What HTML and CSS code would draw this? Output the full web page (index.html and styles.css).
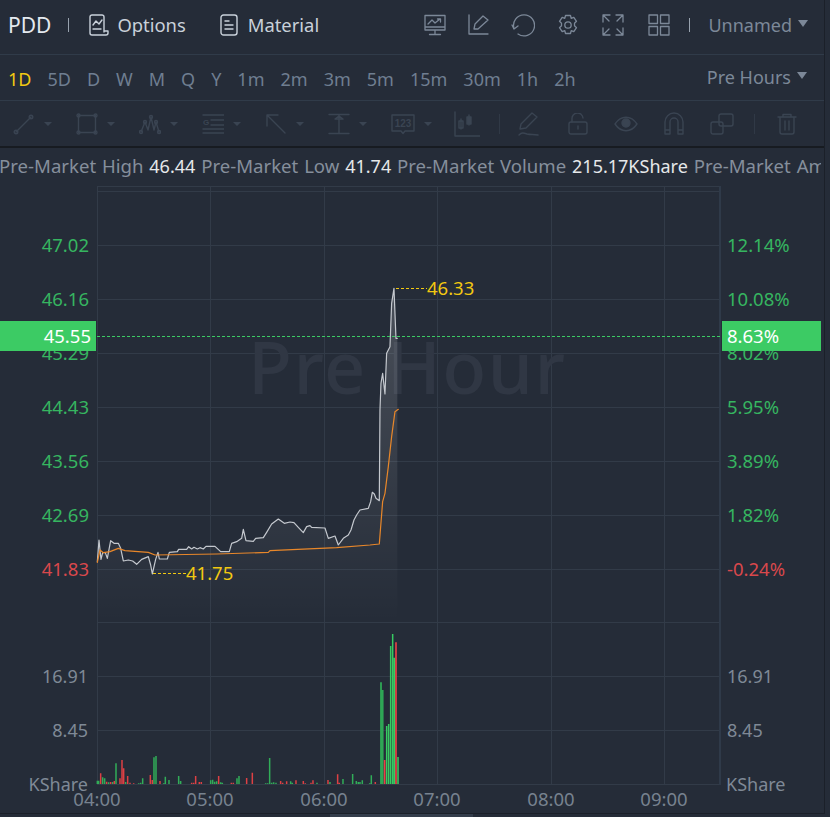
FILE: index.html
```html
<!DOCTYPE html>
<html lang="en">
<head>
<meta charset="utf-8">
<title>PDD Pre Hours chart</title>
<link rel="stylesheet" href="styles.css">
</head>
<body>
<div class="app">
  <header class="topbar">
    <span class="symbol">PDD</span>
    <span class="sep sep-left"></span>
    <a class="toplink link-options">
      <svg class="ic20" viewBox="0 0 20 22"><path d="M15 18V3a2 2 0 0 0-2-2H3a2 2 0 0 0-2 2v16a2 2 0 0 0 2 2h14a2 2 0 0 0 2-2v-2h-4"/><path d="M4 11l3-4 3 3 3-4"/><path d="M4 15h8"/></svg>
      Options
    </a>
    <a class="toplink link-material">
      <svg class="ic18" viewBox="0 0 18 22"><rect x="1" y="1" width="16" height="20" rx="2.5"/><path d="M5 7h4M5 11h8M5 15h8"/></svg>
      Material
    </a>
    <div class="top-actions">
      <svg class="act" viewBox="0 0 22 22"><path d="M1 1.500h20v14.500H1zM11 16v4M5.500 20.500h11M1 13h20"/><path d="M4 10l4-4 3 3 5-4M13.500 5H16.500V8"/></svg>
      <svg class="act" viewBox="0 0 22 22"><path d="M1 1V20H20M6 15l1-5L15 2l5 4-10 9z"/></svg>
      <svg class="act act-wide" viewBox="0 0 24 24"><path d="M7 21A10.500 10.500 0 1 0 3 15.500"/><path d="M1 12 3 16 7 13"/></svg>
      <svg class="act" viewBox="0 0 22 22"><path d="M8.500 1.500h5l.7 2.800 2.600-1 2.700 4-2 2v2.400l2 2-2.700 4-2.600-1-.7 2.800h-5l-.7-2.800-2.600 1-2.700-4 2-2V9.300l-2-2 2.700-4 2.600 1z"/><circle cx="11" cy="11" r="3.200"/></svg>
      <svg class="act" viewBox="0 0 22 22"><path d="M1 8V1h7M1 1l6 6M21 8V1h-7M21 1l-6 6M1 14v7h7M1 21l6-6M21 14v7h-7M21 21l-6-6"/></svg>
      <svg class="act" viewBox="0 0 22 22"><rect x="1" y="1" width="8.500" height="8.500"/><rect x="12.500" y="1" width="8.500" height="8.500"/><rect x="1" y="12.500" width="8.500" height="8.500"/><rect x="12.500" y="12.500" width="8.500" height="8.500"/></svg>
      <span class="sep sep-right"></span>
      <span class="dropdown">Unnamed<i class="caret"></i></span>
    </div>
  </header>

  <nav class="periods">
    <a class="period active">1D</a><a class="period">5D</a><a class="period">D</a><a class="period">W</a><a class="period">M</a><a class="period">Q</a><a class="period">Y</a><a class="period">1m</a><a class="period">2m</a><a class="period">3m</a><a class="period">5m</a><a class="period">15m</a><a class="period">30m</a><a class="period">1h</a><a class="period">2h</a>
    <span class="dropdown session">Pre Hours<i class="caret"></i></span>
  </nav>

  <div class="tools">
    <span class="tool"><svg class="t" viewBox="0 0 22 22"><path d="M3 19 18 4"/><circle cx="3" cy="19" r="1.800"/><circle cx="18" cy="4" r="1.800"/></svg><i class="mini"></i></span>
    <span class="tool"><svg class="t" viewBox="0 0 22 22"><rect x="2.500" y="2.500" width="17" height="17"/><circle cx="2.500" cy="2.500" r="1.500"/><circle cx="19.500" cy="2.500" r="1.500"/><circle cx="2.500" cy="19.500" r="1.500"/><circle cx="19.500" cy="19.500" r="1.500"/></svg><i class="mini"></i></span>
    <span class="tool"><svg class="t" viewBox="0 0 22 22"><path d="M2 19 6 9 9 17 12 4 15 17 17 9 20 19"/><circle cx="2" cy="19" r="1.500"/><circle cx="6" cy="9" r="1.500"/><circle cx="12" cy="4" r="1.500"/><circle cx="17" cy="9" r="1.500"/><circle cx="20" cy="19" r="1.500"/></svg><i class="mini"></i></span>
    <span class="tool"><svg class="t" viewBox="0 0 22 22"><path d="M1 2h21M9 7h13M9 12h13M1 16h21M1 20h21"/><text class="t-g" x="1" y="12">G</text></svg><i class="mini"></i></span>
    <span class="tool"><svg class="t" viewBox="0 0 22 22"><path d="M2 2 20 20M2 13V2h11"/></svg><i class="mini"></i></span>
    <span class="tool"><svg class="t" viewBox="0 0 22 22"><path d="M1 1.500h20M1 20.500h20M11 2v18M7 6l4-3 4 3z"/></svg><i class="mini"></i></span>
    <span class="tool"><svg class="t t-wide" viewBox="0 0 24 22"><path d="M1 2h22v16h-9l-2 2.500-2-2.500H1z"/><text class="t-num" x="12" y="14">123</text></svg><i class="mini"></i></span>
    <span class="tool tool-chart"><svg class="t t-chart" viewBox="0 0 26 26"><path d="M1 1v24h25M7 8v10M15 4v10"/><rect x="5" y="10" width="4" height="7"/><rect x="13" y="6" width="4" height="7" class="fill"/></svg></span>
    <span class="tdiv"></span>
    <svg class="t t-pen" viewBox="0 0 22 24"><path d="M2 17l1-5L14 1l5 4L8 16zM1 23c3-3 5-2 8-1 4 1 6 0 11 1"/></svg>
    <svg class="t t-lock" viewBox="0 0 20 22"><rect x="1" y="9" width="18" height="12" rx="2"/><path d="M4 9V6a5.500 5.500 0 0 1 11-1M10 13v3"/></svg>
    <svg class="t t-eye" viewBox="0 0 24 22"><path d="M1 11c6-9 16-9 22 0-6 9-16 9-22 0z"/><circle cx="12" cy="10" r="4" class="fill"/></svg>
    <svg class="t t-mag" viewBox="0 0 20 24"><path d="M1 22V10a9 9 0 0 1 18 0v12h-5V10a4 4 0 0 0-8 0v12zM1 18h5M14 18h5"/></svg>
    <svg class="t t-copy" viewBox="0 0 24 22"><rect x="9" y="1" width="14" height="12" rx="2"/><rect x="1" y="9" width="12" height="12" rx="2"/></svg>
    <span class="tdiv tdiv-2"></span>
    <svg class="t t-trash" viewBox="0 0 20 22"><path d="M1 4h18M6 4V1.500h8V4M3 4v15a2 2 0 0 0 2 2h10a2 2 0 0 0 2-2V4M8 8v9M12 8v9"/></svg>
  </div>

  <div class="stats">
    Pre-Market High <b>46.44</b> Pre-Market Low <b>41.74</b> Pre-Market Volume <b>215.17KShare</b> Pre-Market Amount
  </div>

  <svg class="chart" viewBox="0 186 825 628" width="825" height="628">
    <defs>
      <linearGradient id="area" gradientUnits="userSpaceOnUse" x1="0" y1="-636" x2="0" y2="366">
        <stop offset="0" stop-color="#fff" stop-opacity=".17"/>
        <stop offset="1" stop-color="#fff" stop-opacity="0"/>
      </linearGradient>
    </defs>

    <path class="grid" d="M97 186.500H720M97 191.500H720M97 245.500H720M97 299.500H720M97 353.500H720M97 407.500H720M97 461.500H720M97 515.500H720M97 569.500H720M97 622.500H720M97 676.500H720M97 730.500H720M97 784.500H720M97.500 186V785M210.500 186V785M324.500 186V785M437.500 186V785M551.500 186V785M664.500 186V785"/>
    <path class="grid grid-edge" d="M720 186V785"/>

    <text class="watermark" x="248" y="394">Pre Hour</text>

    <g transform="translate(90 500) scale(.3333)">
      <path class="area" d="M22 366V185L27 120 33 178 38 158 46 158 52 175 62 122 72 130 85 130 92 145 100 183 115 180 128 183 140 193 155 178 175 170 182 195 187 222 197 178 204 157 208 177 232 177 238 157 262 155 266 148 290 148 296 140 305 147 312 142 322 147 330 143 340 147 348 139 375 139 392 155 418 155 425 130 440 125 455 115 460 88 468 122 490 124 497 115 520 113 530 97 545 72 565 57 583 70 600 66 612 68 625 82 640 98 650 80 660 77 665 82 705 84 715 115 735 108 750 128 760 115 775 105 783 90 792 60 800 45 810 30 835 25 842 5 847 -23 853 -18 858 -5 868 2 870 -270 873 -350 878 -380 885 -318 890 -440 900 -460 905 -590 912 -635 918 -485 922 -485V366Z"/>
      <path class="white-line" d="M22 185 27 120 33 178 38 158 46 158 52 175 62 122 72 130 85 130 92 145 100 183 115 180 128 183 140 193 155 178 175 170 182 195 187 222 197 178 204 157 208 177 232 177 238 157 262 155 266 148 290 148 296 140 305 147 312 142 322 147 330 143 340 147 348 139 375 139 392 155 418 155 425 130 440 125 455 115 460 88 468 122 490 124 497 115 520 113 530 97 545 72 565 57 583 70 600 66 612 68 625 82 640 98 650 80 660 77 665 82 705 84 715 115 735 108 745 135 760 115 775 105 783 90 792 60 800 45 810 30 835 25 842 5 847 -23 853 -18 858 -5 868 2 870 -270 873 -350 878 -380 885 -318 890 -440 900 -460 905 -590 912 -635 918 -485 922 -485"/>
      <path class="orange-line" d="M22 187 30 150 40 158 60 155 85 145 105 152 175 157 195 165 380 162 535 157 540 152 740 143 840 135 868 132 878 5 885 -20 895 -100 905 -190 915 -265 925 -272"/>
    </g>

    <path class="dash-green" d="M97 336.500H720"/>
    <path class="dash-yellow" d="M396 288.500H427M153 573.500H186"/>
    <text class="note" x="427" y="295">46.33</text>
    <text class="note" x="186" y="580">41.75</text>

    <g transform="translate(90 720) scale(.3333)">
      <path class="vol-g" d="M22 192V182M26 192V182M38 192V172M44 192V175M56 192V187M68 192V186M78 192V130M107 192V186M146 192V190M152 192V188M158 192V175M192 192V112M198 192V108M221 192V190M226 192V170M237 192V180M266 192V168M272 192V183M362 192V181M368 192V179M374 192V185M380 192V184M392 192V187M397 192V188M441 192V175M447 192V168M527 192V190M533 192V190M539 192V114M545 192V188M551 192V187M558 192V188M602 192V184M607 192V188M681 192V188M720 192V186M759 192V177M788 192V162M799 192V183M805 192V186M810 192V186M817 192V181M839 192V190M844 192V166"/>
      <path class="vol-r" d="M32 192V160M50 192V185M62 192V186M73 192V183M90 192V175M96 192V120M101 192V145M113 192V168M120 192V188M131 192V190M181 192V165M187 192V180M210 192V183M305 192V188M311 192V188M317 192V168M328 192V186M334 192V186M386 192V168M424 192V188M430 192V188M470 192V174M487 192V158M572 192V183M578 192V188M590 192V184M618 192V181M640 192V183M646 192V190M663 192V188M669 192V181M714 192V180M743 192V163M748 192V188M856 192V186"/>
    </g>
    <g transform="translate(370 625) scale(.3333)">
      <path class="vol-big-d" d="M33 477V172M38 477V195"/>
      <path class="vol-big-g" d="M50 477V303M56 477V297M62 477V63M68 477V27M73 477V98M84 477V396"/>
      <path class="vol-big-r" d="M44 477V405M78 477V52"/>
    </g>

    <g class="axis-left">
      <text class="up" x="89" y="252">47.02</text>
      <text class="up" x="89" y="306">46.16</text>
      <text class="up" x="89" y="360">45.29</text>
      <text class="up" x="89" y="414">44.43</text>
      <text class="up" x="89" y="468">43.56</text>
      <text class="up" x="89" y="522">42.69</text>
      <text class="down" x="89" y="576">41.83</text>
      <text class="mute" x="88" y="683">16.91</text>
      <text class="mute" x="88" y="737">8.45</text>
      <text class="mute" x="88" y="791">KShare</text>
    </g>
    <g class="axis-right">
      <text class="up" x="727" y="252">12.14%</text>
      <text class="up" x="727" y="306">10.08%</text>
      <text class="up" x="727" y="360">8.02%</text>
      <text class="up" x="727" y="414">5.95%</text>
      <text class="up" x="727" y="468">3.89%</text>
      <text class="up" x="727" y="522">1.82%</text>
      <text class="down" x="727" y="576">-0.24%</text>
      <text class="mute" x="727" y="683">16.91</text>
      <text class="mute" x="727" y="737">8.45</text>
      <text class="mute" x="726" y="791">KShare</text>
    </g>
    <g class="axis-x">
      <text x="97" y="806">04:00</text>
      <text x="210" y="806">05:00</text>
      <text x="324" y="806">06:00</text>
      <text x="437" y="806">07:00</text>
      <text x="551" y="806">08:00</text>
      <text x="664" y="806">09:00</text>
    </g>

    <rect class="badge" x="0" y="321" width="96" height="30"/>
    <rect class="badge" x="722" y="321" width="99" height="30"/>
    <text class="badge-text end" x="91" y="343">45.55</text>
    <text class="badge-text" x="727" y="343">8.63%</text>
  </svg>
</div>
<div class="statusbar"><span class="status-seg"></span></div>
</body>
</html>
```
FILE: styles.css
```css
* { box-sizing: border-box; }
html, body { margin: 0; padding: 0; }
body {
  width: 830px;
  height: 817px;
  overflow: hidden;
  background: #252c38;
  font-family: "Noto Sans", "Open Sans", sans-serif;
  font-size: 18px;
  color: #7c8898;
}
.app {
  width: 825px;
  height: 814px;
  border-right: 1px solid #1b2029;
  border-bottom: 1px solid #1b2029;
  display: flex;
  flex-direction: column;
  overflow: hidden;
}
.statusbar { height: 3px; padding-left: 330px; }
.status-seg { display: block; width: 143px; height: 3px; background: #343d4b; }

svg { fill: none; stroke-linecap: round; stroke-linejoin: round; }

/* top bar */
.topbar {
  height: 55px;
  flex: none;
  display: flex;
  align-items: center;
  padding-left: 8px;
  padding-bottom: 5px;
  border-bottom: 1px solid #303b49;
}
.symbol { font-size: 21px; color: #e4e9ef; }
.sep { width: 1px; height: 14px; background: #98a2ae; flex: none; }
.sep-left { margin-left: 17px; }
.toplink { display: flex; align-items: center; color: #c9d1da; font-size: 18.4px; }
.toplink svg { stroke: #c9d1da; stroke-width: 1.4; }
.link-options { margin-left: 20px; gap: 8px; }
.link-material { margin-left: 34px; gap: 10px; }
.ic20 { width: 20px; height: 22px; }
.ic18 { width: 18px; height: 22px; }
.top-actions { margin-left: auto; display: flex; align-items: center; }
.act { width: 22px; height: 22px; margin-right: 23px; stroke: #7c8898; stroke-width: 1.3; }
.act-wide { width: 24px; height: 24px; margin-right: 22px; }
.act:nth-of-type(1) { margin-right: 22px; }
.act:nth-of-type(2) { margin-right: 21px; }
.act:nth-of-type(5) { margin-right: 24px; }
.act:nth-of-type(6) { margin-right: 19px; }
.sep-right { margin-right: 18px; }
.top-actions .dropdown { margin-right: 16px; }
.dropdown { display: flex; align-items: center; gap: 6px; }
.caret {
  width: 0;
  height: 0;
  border-left: 5px solid transparent;
  border-right: 5px solid transparent;
  border-top: 7px solid #7c8898;
  margin-top: -3px;
}

/* period row */
.periods {
  height: 46px;
  flex: none;
  display: flex;
  align-items: center;
  gap: 16px;
  padding-left: 8px;
  padding-right: 17px;
  padding-top: 2px;
  border-bottom: 1px solid #303b49;
}
.period { color: #6f7e91; }
.period.active { color: #f2c811; }
.session { margin-left: auto; margin-top: -4px; }

/* drawing tools */
.tools {
  height: 47px;
  flex: none;
  display: flex;
  align-items: center;
  padding-left: 13px;
  border-bottom: 2px solid #171b21;
}
.t { width: 22px; height: 22px; stroke: #3a4452; stroke-width: 1.4; flex: none; }
.t .fill { fill: #3a4452; }
.t-g { font-size: 8px; font-weight: 700; fill: #3a4452; stroke: none; font-family: "Liberation Sans", sans-serif; }
.t-num { font-size: 10px; font-weight: 700; fill: #3a4452; stroke: none; text-anchor: middle; font-family: "Liberation Sans", sans-serif; }
.tool { width: 63px; flex: none; display: flex; align-items: center; gap: 9px; }
.t-wide { width: 24px; }
.mini {
  width: 0;
  height: 0;
  border-left: 4px solid transparent;
  border-right: 4px solid transparent;
  border-top: 4px solid #3a4452;
}
.tool-chart { width: auto; }
.t-chart { width: 26px; height: 26px; }
.tdiv { width: 1px; height: 20px; background: #303946; margin-left: 19px; flex: none; }
.t-pen { height: 24px; margin-left: 18px; }
.t-lock { width: 20px; margin-left: 28px; }
.t-eye { width: 24px; margin-left: 26px; }
.t-mag { width: 20px; height: 24px; margin-left: 26px; }
.t-copy { width: 24px; margin-left: 26px; }
.tdiv-2 { margin-left: 20px; }
.t-trash { width: 20px; margin-left: 22px; }

/* stat line */
.stats {
  height: 38px;
  flex: none;
  width: 821px;
  line-height: 36px;
  white-space: nowrap;
  overflow: hidden;
  font-size: 18.6px;
  word-spacing: 1px;
  color: #858f9c;
  text-indent: -1px;
}
.stats b { font-weight: 400; font-size: 18px; color: #e6e8ea; }

/* chart canvas */
.chart { display: block; flex: none; font-size: 18.5px; }
.grid { stroke: #323b48; stroke-width: 1; stroke-linecap: butt; }
.grid-edge { stroke-width: 2; stroke: #2f3a49; }
.watermark { fill: #303744; font-size: 72px; font-weight: 500; letter-spacing: 1.5px; stroke: none; }
.area { fill: url(#area); stroke: none; }
.white-line { stroke: #c4c8ce; stroke-width: 3.6; }
.orange-line { stroke: #e8872a; stroke-width: 3.6; }
.dash-green { stroke: #3ccb64; stroke-dasharray: 3 2; stroke-linecap: butt; }
.dash-yellow { stroke: #f2c811; stroke-dasharray: 3 2; stroke-linecap: butt; }
.note { fill: #f2c811; stroke: none; }
.vol-g, .vol-r, .vol-big-g, .vol-big-r, .vol-big-d { stroke-linecap: butt; stroke-width: 4.5; }
.vol-g { stroke: #31ad58; }
.vol-r { stroke: #dd4044; }
.vol-big-g { stroke: #37cb62; }
.vol-big-d { stroke: #2ea655; stroke-width: 5.5; }
.vol-big-r { stroke: #e84146; stroke-width: 5; }
.axis-left text { text-anchor: end; stroke: none; }
.axis-right text { stroke: none; }
.up { fill: #36b560; }
.down { fill: #d9484c; }
.mute { fill: #7f8996; font-size: 18px; }
.axis-x text { fill: #77828f; text-anchor: middle; stroke: none; }
.badge { fill: #3ccb64; stroke: none; }
.badge-text { fill: #fff; stroke: none; }
.badge-text.end { text-anchor: end; }
```
